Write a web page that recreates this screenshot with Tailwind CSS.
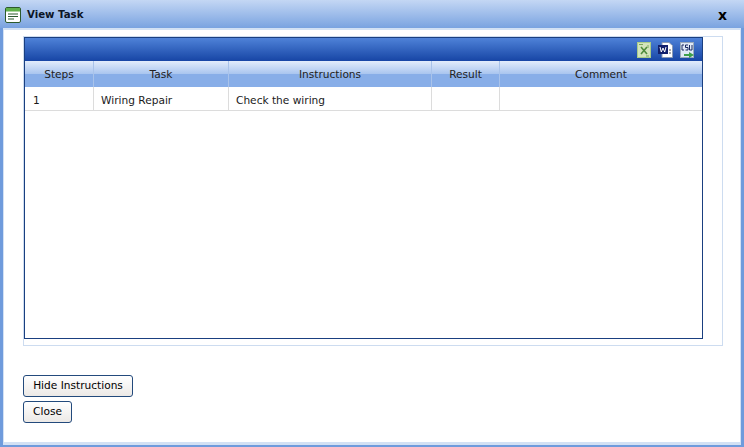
<!DOCTYPE html>
<html><head><script src="https://cdn.jsdelivr.net/npm/@tailwindcss/browser@4"></script></head>
<body class="m-0">
<div class="w-[744px] h-[447px] flex flex-col overflow-hidden bg-[#6f9bdc] font-['DejaVu_Sans',sans-serif] text-[10.6px] text-[#1a1a1a]">
  <div class="h-[28px] shrink-0 flex items-center pl-[5px] pr-[17px] pt-[1px] bg-gradient-to-b from-[#c4d7f4] to-[#7aa3e0]">
    <svg width="16" height="16" viewBox="0 0 16 16" class="shrink-0"><rect x="0.5" y="0.5" width="15" height="15" rx="1.5" fill="#fff" stroke="#2c5a2c"/><rect x="1" y="1" width="14" height="3.5" fill="#5fb04a"/><path d="M3 7h10M3 9.5h10M3 12h6" stroke="#2a5a30" stroke-width="1.1"/></svg>
    <span class="ml-[6px] font-bold text-[10.2px] text-[#0c1526]">View Task</span>
    <span class="ml-auto font-bold text-[14px] leading-none text-black">x</span>
  </div>
  <div class="h-[417px] shrink-0 mx-[3px] bg-[#d3e1f4] pt-[2px] px-[1px] pb-[3px] flex">
    <div class="flex-1 bg-white pl-[19px] pr-[17px] pt-[6px] flex flex-col min-h-0">
      <div class="h-[310px] shrink-0 border border-[#cddcf0] pr-[19px] pb-[6px]">
        <div class="h-full border border-[#1a3f80] flex flex-col">
          <div class="h-[23px] shrink-0 flex items-center justify-end gap-[7px] pr-[8px] bg-gradient-to-b from-[#4f82d8] to-[#1745a5]">
            <svg width="14" height="16" viewBox="0 0 14 16"><rect width="14" height="16" fill="#a9cb88"/><rect x="1" y="1" width="12" height="14" fill="#d3e4bb"/><path d="M4 5l6 7M10 5l-6 7" stroke="#4f8c3c" stroke-width="1.6"/><path d="M2 2.5h4M9 14h3M11 3v3" stroke="#7aa65c"/></svg>
            <svg width="15" height="16" viewBox="0 0 15 16"><path d="M4 0.5h7l3.5 3v12H4z" fill="#fff" stroke="#8a9ab5"/><rect x="0" y="3" width="10" height="9" fill="#12206c"/><path d="M2 5l1.3 5 1.7-4 1.7 4L8 5" stroke="#fff" fill="none"/><path d="M11 8h2M11 11h2" stroke="#555"/></svg>
            <svg width="14" height="16" viewBox="0 0 14 16"><rect x="0.5" y="0.5" width="13" height="15" fill="#dfe9f7" stroke="#9ab"/><path d="M4 3H2v5h2M8 3H5.5v2.5H8V8H5.5M9.5 3v5h2.500V3" stroke="#1a2a60" fill="none"/><path d="M4 12h5v-2l5 3-5 3v-2H4z" fill="#3ea04a"/></svg>
          </div>
          <div class="flex h-[26px] shrink-0 text-center text-[#222] bg-[linear-gradient(#e2ecfb_0,#a9c5ef_50%,#88aee8_50%,#88aee8_100%)]">
            <div class="w-[69px] border-r border-[#a9c3ea] leading-[26px]">Steps</div>
            <div class="w-[135px] border-r border-[#a9c3ea] leading-[26px]">Task</div>
            <div class="w-[203px] border-r border-[#a9c3ea] leading-[26px]">Instructions</div>
            <div class="w-[68px] border-r border-[#a9c3ea] leading-[26px]">Result</div>
            <div class="flex-1 leading-[26px]">Comment</div>
          </div>
          <div class="flex h-[24px] shrink-0 border-b border-[#dcdcdc] leading-[26px]">
            <div class="w-[69px] border-r border-[#dcdcdc] pl-[8px]">1</div>
            <div class="w-[135px] border-r border-[#dcdcdc] pl-[7px]">Wiring Repair</div>
            <div class="w-[203px] border-r border-[#dcdcdc] pl-[7px]">Check the wiring</div>
            <div class="w-[68px] border-r border-[#dcdcdc]"></div>
            <div class="flex-1"></div>
          </div>
        </div>
      </div>
      <button class="mt-[29px] self-start h-[22px] w-[110px] rounded-[3px] border border-[#234a7c] bg-gradient-to-b from-white to-[#ece9e6] text-[10.6px] text-black">Hide Instructions</button>
      <button class="mt-[4px] self-start h-[22px] w-[49px] rounded-[3px] border border-[#234a7c] bg-gradient-to-b from-white to-[#ece9e6] text-[10.6px] text-black">Close</button>
    </div>
  </div>
</div>
</body></html>
